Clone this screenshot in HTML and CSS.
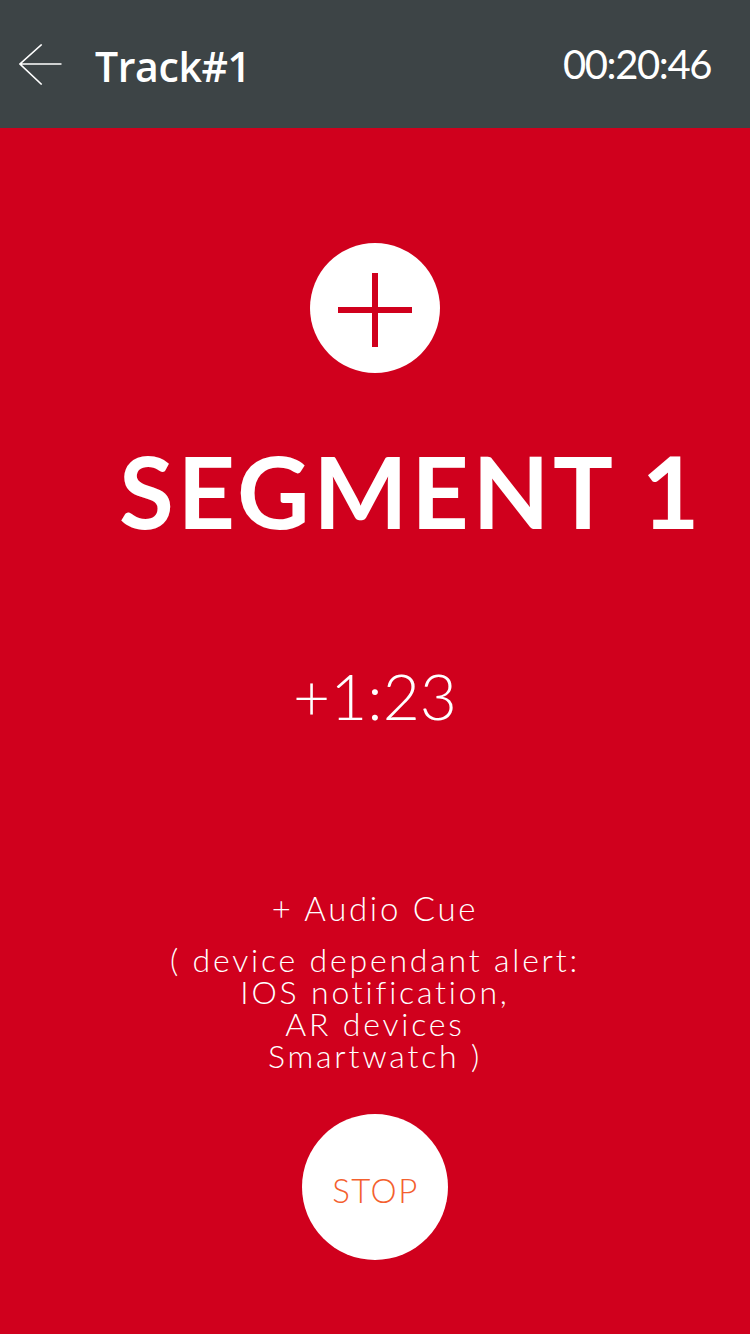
FILE: index.html
```html
<!DOCTYPE html>
<html lang="en">
<head>
<meta charset="utf-8">
<title>Track#1</title>
<link rel="stylesheet" href="styles.css">
</head>
<body>
<div class="screen">
  <header class="topbar">
    <svg class="back" viewBox="0 0 43 41" width="43" height="41" aria-label="Back">
      <path d="M22.7 0.5 L1 20 L22.7 40.5 M1 20 H42.5" fill="none" stroke="#ffffff" stroke-width="1.6"/>
    </svg>
    <h1 class="title">Track#1</h1>
    <span class="clock">00:20:46</span>
  </header>
  <main class="segment">
    <div class="add-btn">
      <svg viewBox="0 0 74 74" width="74" height="74">
        <rect x="0" y="34" width="74" height="6" fill="#d0001d"/>
        <rect x="34" y="0" width="6" height="74" fill="#d0001d"/>
      </svg>
    </div>
    <h2 class="segment-name">SEGMENT 1</h2>
    <div class="delta">+1:23</div>
    <p class="cue">+ Audio Cue</p>
    <p class="cue-note">( device dependant alert:<br>IOS notification,<br>AR devices<br>Smartwatch )</p>
    <button class="stop-btn">STOP</button>
  </main>
</div>
</body>
</html>
```
FILE: styles.css
```css
html, body {
  margin: 0;
  padding: 0;
}
body {
  width: 750px;
  height: 1334px;
  overflow: hidden;
  background: #d0001d;
  font-family: "Lato", "Open Sans", sans-serif;
  color: #ffffff;
}
.screen {
  display: flex;
  flex-direction: column;
  height: 1334px;
}
.topbar {
  flex: 0 0 auto;
  height: 128px;
  box-sizing: border-box;
  background: #3d4446;
  display: flex;
  align-items: flex-start;
  padding: 44px 39px 0 19px;
}
.back {
  display: block;
  flex: 0 0 auto;
}
.title {
  margin: 2px 0 0 33px;
  font-family: "Open Sans", sans-serif;
  font-weight: 600;
  font-size: 41px;
  line-height: 1;
  letter-spacing: -0.4px;
  flex: 1 1 auto;
}
.clock {
  font-family: "Lato", sans-serif;
  font-weight: 400;
  font-size: 40px;
  line-height: 1;
  letter-spacing: -1.4px;
}
.segment {
  flex: 1 1 auto;
  background: #d0001d;
  display: flex;
  flex-direction: column;
  align-items: center;
}
.add-btn {
  margin-top: 115px;
  width: 130px;
  height: 130px;
  border-radius: 50%;
  background: #ffffff;
  display: flex;
  align-items: center;
  justify-content: center;
}
.add-btn svg {
  display: block;
  margin-top: 4px;
}
.segment-name {
  align-self: stretch;
  margin: 67px 0 0 0;
  padding-left: 119px;
  font-family: "Lato", sans-serif;
  font-weight: 700;
  font-size: 100px;
  line-height: 1;
  letter-spacing: 3.6px;
  white-space: nowrap;
}
.delta {
  margin-top: 124px;
  font-weight: 300;
  font-size: 64px;
  line-height: 1;
}
.cue {
  margin: 164px 0 0 0;
  font-weight: 300;
  font-size: 33px;
  line-height: 1;
  letter-spacing: 2.7px;
}
.cue-note {
  margin: 19px 0 0 0;
  font-weight: 300;
  font-size: 32px;
  line-height: 32px;
  letter-spacing: 2.8px;
  text-align: center;
}
.stop-btn {
  margin-top: 42px;
  width: 146px;
  height: 146px;
  border: none;
  border-radius: 50%;
  background: #ffffff;
  color: #f4602e;
  font-family: "Lato", sans-serif;
  font-weight: 300;
  font-size: 33px;
  line-height: 1;
  letter-spacing: 1.5px;
  padding: 6px 0 0 1px;
}
```
